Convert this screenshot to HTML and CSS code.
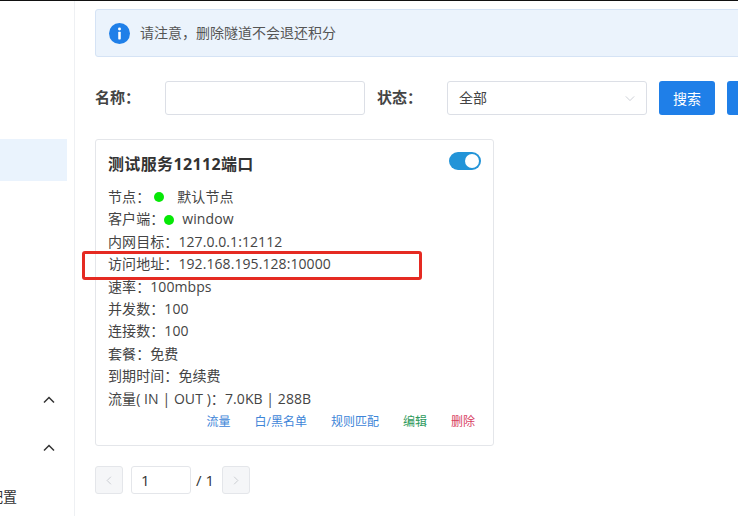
FILE: index.html
```html
<!DOCTYPE html>
<html lang="zh-CN">
<head>
<meta charset="utf-8">
<title>隧道列表</title>
<link rel="stylesheet" href="styles.css">
</head>
<body>
<div class="app">
  <aside class="sidebar">
    <div class="nav-active"></div>
    <div class="nav-group">
      <svg class="chev" viewBox="0 0 12 8"><path d="M1 6.5 6 1.5l5 5" fill="none" stroke="#333" stroke-width="1.5"/></svg>
    </div>
    <div class="nav-group second">
      <svg class="chev" viewBox="0 0 12 8"><path d="M1 6.5 6 1.5l5 5" fill="none" stroke="#333" stroke-width="1.5"/></svg>
    </div>
    <div class="nav-sub">配置</div>
  </aside>
  <main class="main">
    <div class="alert">
      <svg class="alert-icon" viewBox="0 0 20 20"><circle cx="10" cy="10" r="10" fill="#1f7fe8"/><rect x="8.8" y="8.4" width="2.4" height="7.2" rx=".6" fill="#fff"/><circle cx="10" cy="5.8" r="1.4" fill="#fff"/></svg>
      <span class="alert-text">请注意，删除隧道不会退还积分</span>
    </div>
    <form class="filters">
      <label class="label label-name">名称：</label>
      <div class="input"></div>
      <label class="label label-state">状态：</label>
      <div class="select">
        <span>全部</span>
        <svg class="select-arrow" viewBox="0 0 12 8"><path d="M1 1.5 6 6.5l5-5" fill="none" stroke="#c8ccd2" stroke-width="1.1"/></svg>
      </div>
      <div class="btn">搜索</div>
      <div class="btn btn-cut"></div>
    </form>
    <section class="card">
      <div class="card-head">
        <h3 class="card-title">测试服务12112端口</h3>
        <div class="switch"><i class="knob"></i></div>
      </div>
      <ul class="rows">
        <li>节点：<i class="dot dot-node"></i>默认节点</li>
        <li>客户端：<i class="dot dot-client"></i>window</li>
        <li>内网目标：127.0.0.1:12112</li>
        <li>访问地址：192.168.195.128:10000</li>
        <li>速率：100mbps</li>
        <li>并发数：100</li>
        <li>连接数：100</li>
        <li>套餐：免费</li>
        <li>到期时间：免续费</li>
        <li>流量( IN | OUT )：7.0KB | 288B</li>
      </ul>
      <div class="actions">
        <a class="blue">流量</a>
        <a class="blue">白/黑名单</a>
        <a class="blue">规则匹配</a>
        <a class="green">编辑</a>
        <a class="red">删除</a>
      </div>
    </section>
    <nav class="pager">
      <div class="page-btn"><svg viewBox="0 0 8 12"><path d="M6.5 1 1.5 6l5 5" fill="none" stroke="#c6c9ce" stroke-width="1.2"/></svg></div>
      <div class="page-input">1</div>
      <span class="page-total">/ 1</span>
      <div class="page-btn"><svg viewBox="0 0 8 12"><path d="M1.5 1l5 5-5 5" fill="none" stroke="#c6c9ce" stroke-width="1.2"/></svg></div>
    </nav>
  </main>
</div>
<div class="highlight"></div>
</body>
</html>
```
FILE: styles.css
```css
* { box-sizing: border-box; }
html, body { margin: 0; height: 100%; }
body {
  width: 738px;
  height: 516px;
  overflow: hidden;
  position: relative;
  background: #fff;
  color: #333;
  font-family: "Open Sans", "Noto Sans CJK SC", sans-serif;
  font-size: 14px;
  border-top: 1px solid #111;
}
.app { display: flex; height: 515px; }
.sidebar {
  width: 75px;
  flex: none;
  border-right: 1px solid #eef0f3;
  overflow: hidden;
  padding-top: 138px;
}
.nav-active { width: 67px; height: 42px; background: #eaf3fd; }
.nav-group { height: 10px; margin-top: 214px; padding-left: 43px; display: flex; align-items: center; }
.nav-group.second { margin-top: 38px; }
.chev { width: 12px; height: 8px; display: block; }
.nav-sub { margin: 33px 0 0 -11px; line-height: 22px; font-size: 14px; white-space: nowrap; }
.main { flex: 1; min-width: 0; padding: 8px 0 0 20px; overflow: hidden; }
.alert {
  width: 680px;
  height: 48px;
  display: flex;
  align-items: center;
  gap: 10px;
  padding-left: 13px;
  background: #ebf3fc;
  border: 1px solid #d5e3f5;
  border-radius: 3px;
  font-size: 14px;
  color: #555;
}
.alert-text { position: relative; top: -1px; }
.alert-icon { width: 21px; height: 21px; flex: none; }
.filters { display: flex; align-items: center; height: 34px; margin-top: 24px; width: 700px; }
.label { font-weight: 700; font-size: 15px; line-height: 32px; height: 34px; color: #444; flex: none; }
.label-name { width: 70px; }
.label-state { width: 70px; margin-left: 12px; }
.input { width: 200px; height: 34px; border: 1px solid #dcdfe6; border-radius: 3px; flex: none; }
.select {
  width: 200px;
  height: 34px;
  flex: none;
  border: 1px solid #dcdfe6;
  border-radius: 3px;
  padding: 0 11px;
  display: flex;
  align-items: center;
  justify-content: space-between;
  font-size: 14px;
  line-height: 30px;
  color: #444;
}
.select-arrow { width: 10px; height: 7px; }
.btn {
  width: 56px;
  height: 34px;
  flex: none;
  margin-left: 12px;
  background: #1f7fe8;
  color: #fff;
  border-radius: 3px;
  display: flex;
  align-items: center;
  justify-content: center;
  font-size: 14px;
}
.card {
  width: 399px;
  height: 307px;
  margin-top: 24px;
  border: 1px solid #e4e6ea;
  border-radius: 3px;
  padding: 12px 12px 0;
}
.card-head { display: flex; justify-content: space-between; align-items: flex-start; height: 34px; }
.card-title { margin: 0; font-size: 16px; font-weight: 700; line-height: 25px; letter-spacing: .35px; color: #333; }
.switch { width: 32px; height: 18px; border-radius: 9px; background: #2394d8; position: relative; margin-top: 0; }
.knob { position: absolute; top: 2px; right: 2px; width: 14px; height: 14px; border-radius: 50%; background: #fff; }
.rows { list-style: none; margin: 0; padding: 0; }
.rows li { line-height: 22.4px; height: 22.4px; white-space: nowrap; display: flex; align-items: center; font-size: 14px; letter-spacing: .08px; color: #444; }
.dot { display: inline-block; width: 10px; height: 10px; border-radius: 50%; background: #06e806; }
.dot-node { margin: 0 13px 0 4px; }
.dot-client { margin: 0 8px 0 0; }
.actions { display: flex; justify-content: flex-end; gap: 24px; padding-right: 6px; line-height: 22px; font-size: 12px; margin-top: 1px; }
.blue { color: #3d85d8; }
.green { color: #2e9a5c; }
.red { color: #d8415f; }
.pager { display: flex; align-items: center; margin-top: 20px; height: 28px; font-size: 15px; }
.page-btn {
  width: 28px;
  height: 28px;
  background: #f5f6f8;
  border: 1px solid #e4e6ea;
  border-radius: 3px;
  display: flex;
  align-items: center;
  justify-content: center;
}
.page-btn svg { width: 6px; height: 9px; }
.page-input {
  width: 60px;
  height: 28px;
  margin-left: 8px;
  border: 1px solid #e4e6ea;
  border-radius: 3px;
  padding-left: 9px;
  line-height: 26px;
}
.page-total { width: 31px; padding-left: 5px; flex: none; }
.highlight {
  position: absolute;
  left: 82px;
  top: 250px;
  width: 340px;
  height: 29px;
  border: 3px solid #e52a22;
  border-radius: 3px;
}
```
